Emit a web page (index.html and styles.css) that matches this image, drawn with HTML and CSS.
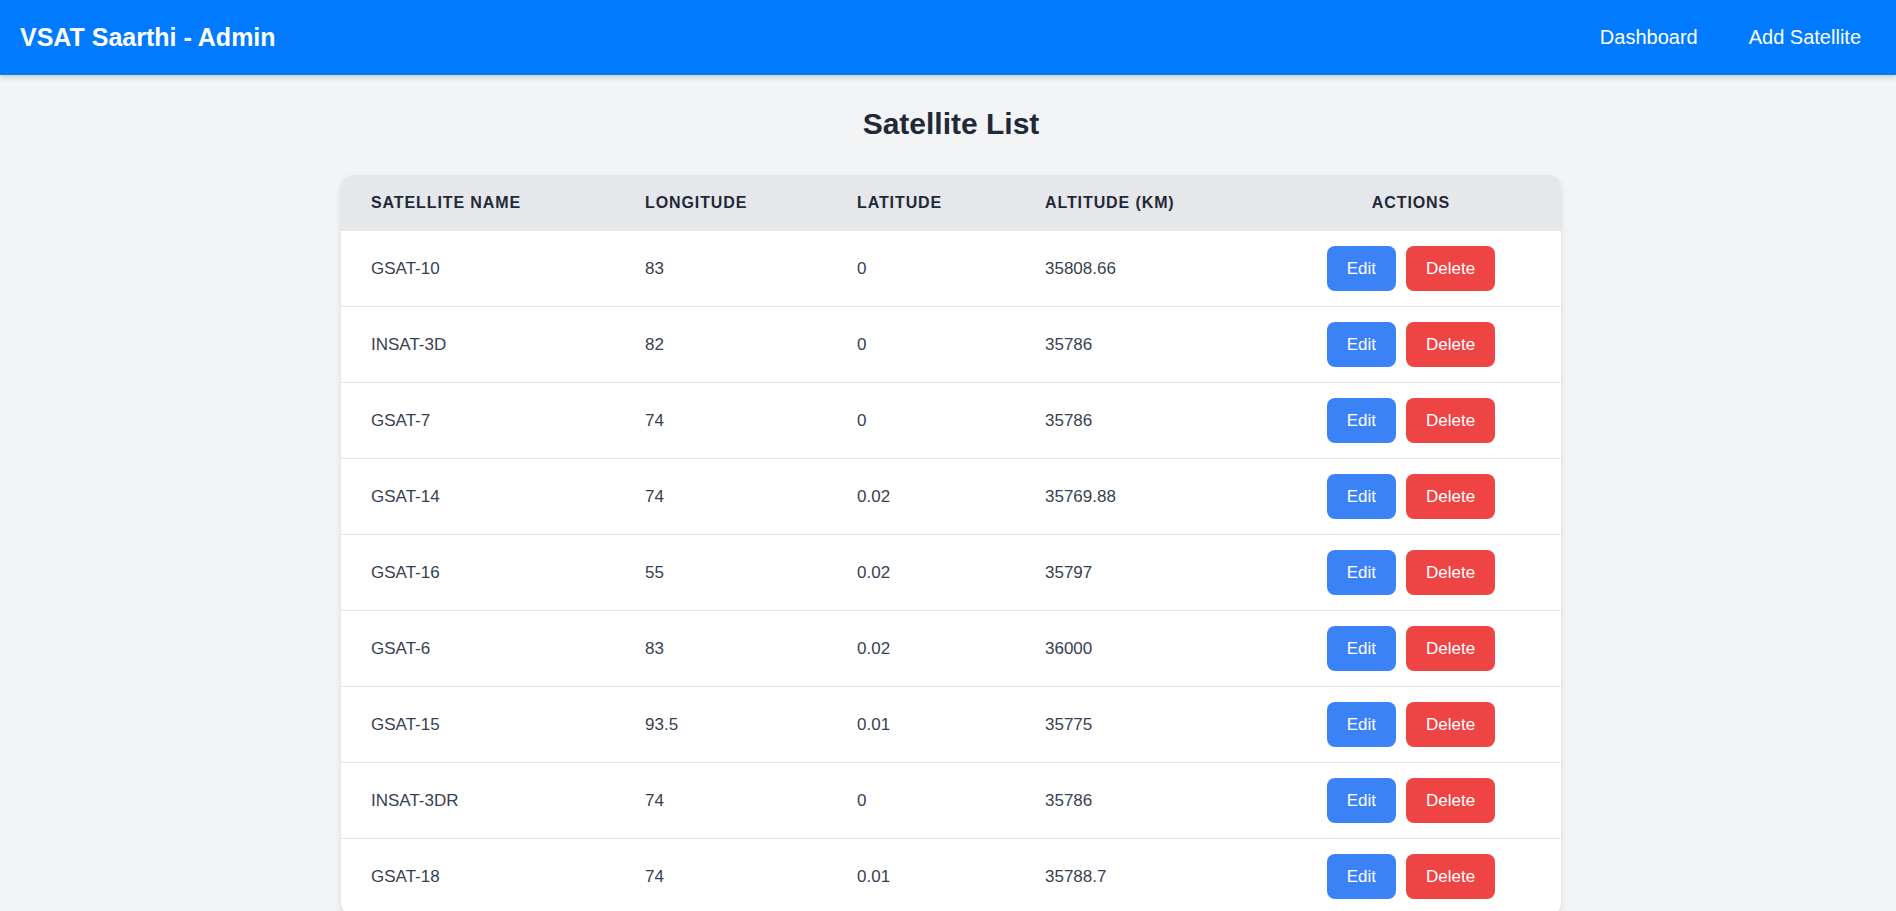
FILE: index.html
```html
<!DOCTYPE html>
<html lang="en">
<head>
<meta charset="utf-8">
<title>VSAT Saarthi - Admin</title>
<link rel="stylesheet" href="styles.css">
</head>
<body>
<header class="navbar">
  <div class="brand">VSAT Saarthi - Admin</div>
  <nav class="nav-links">
    <a href="#" class="nav-link">Dashboard</a>
    <a href="#" class="nav-link">Add Satellite</a>
  </nav>
</header>
<main class="main">
  <h1 class="page-title">Satellite List</h1>
  <div class="table-card">
    <table class="sat-table">
      <colgroup>
        <col class="c-name"><col class="c-lon"><col class="c-lat"><col class="c-alt"><col class="c-act">
      </colgroup>
      <thead>
        <tr>
          <th>Satellite Name</th>
          <th>Longitude</th>
          <th>Latitude</th>
          <th>Altitude (km)</th>
          <th class="center">Actions</th>
        </tr>
      </thead>
      <tbody>
        <tr><td>GSAT-10</td><td>83</td><td>0</td><td>35808.66</td><td><div class="actions"><button class="btn btn-edit">Edit</button><button class="btn btn-delete">Delete</button></div></td></tr>
        <tr><td>INSAT-3D</td><td>82</td><td>0</td><td>35786</td><td><div class="actions"><button class="btn btn-edit">Edit</button><button class="btn btn-delete">Delete</button></div></td></tr>
        <tr><td>GSAT-7</td><td>74</td><td>0</td><td>35786</td><td><div class="actions"><button class="btn btn-edit">Edit</button><button class="btn btn-delete">Delete</button></div></td></tr>
        <tr><td>GSAT-14</td><td>74</td><td>0.02</td><td>35769.88</td><td><div class="actions"><button class="btn btn-edit">Edit</button><button class="btn btn-delete">Delete</button></div></td></tr>
        <tr><td>GSAT-16</td><td>55</td><td>0.02</td><td>35797</td><td><div class="actions"><button class="btn btn-edit">Edit</button><button class="btn btn-delete">Delete</button></div></td></tr>
        <tr><td>GSAT-6</td><td>83</td><td>0.02</td><td>36000</td><td><div class="actions"><button class="btn btn-edit">Edit</button><button class="btn btn-delete">Delete</button></div></td></tr>
        <tr><td>GSAT-15</td><td>93.5</td><td>0.01</td><td>35775</td><td><div class="actions"><button class="btn btn-edit">Edit</button><button class="btn btn-delete">Delete</button></div></td></tr>
        <tr><td>INSAT-3DR</td><td>74</td><td>0</td><td>35786</td><td><div class="actions"><button class="btn btn-edit">Edit</button><button class="btn btn-delete">Delete</button></div></td></tr>
        <tr><td>GSAT-18</td><td>74</td><td>0.01</td><td>35788.7</td><td><div class="actions"><button class="btn btn-edit">Edit</button><button class="btn btn-delete">Delete</button></div></td></tr>
      </tbody>
    </table>
  </div>
</main>
</body>
</html>
```

FILE: styles.css
```css
* { box-sizing: border-box; }

html, body {
  margin: 0;
  padding: 0;
}

body {
  background: #f3f4f6;
  font-family: "Liberation Sans", Arial, sans-serif;
  color: #374151;
}

.navbar {
  height: 75px;
  background: #007bff;
  display: flex;
  align-items: center;
  justify-content: space-between;
  padding: 0 35px 0 20px;
  box-shadow: 0 2px 6px rgba(0, 0, 0, 0.18);
  position: relative;
  z-index: 2;
}

.brand {
  color: #ffffff;
  font-weight: bold;
  font-size: 25px;
}

.nav-links {
  display: flex;
  gap: 51px;
}

.nav-link {
  color: #ffffff;
  text-decoration: none;
  font-size: 20px;
}

.main {
  padding: 31px 0 0 6px;
}

.page-title {
  margin: 0 0 33px;
  text-align: center;
  font-size: 30px;
  line-height: 36px;
  font-weight: bold;
  color: #1f2937;
}

.table-card {
  width: 1220px;
  margin: 0 auto;
  background: #ffffff;
  border-radius: 12px;
  overflow: hidden;
  box-shadow: 0 4px 8px rgba(0, 0, 0, 0.08), 0 1px 3px rgba(0, 0, 0, 0.06);
}

.sat-table {
  width: 100%;
  border-collapse: separate;
  border-spacing: 0;
  table-layout: fixed;
}

.c-name { width: 274px; }
.c-lon { width: 212px; }
.c-lat { width: 188px; }
.c-alt { width: 246px; }
.c-act { width: 300px; }

.sat-table th {
  background: #e5e7eb;
  color: #1f2937;
  font-size: 16px;
  font-weight: bold;
  text-transform: uppercase;
  letter-spacing: 0.9px;
  text-align: left;
  line-height: 18px;
  padding: 19px 30px;
}

.sat-table th.center { text-align: center; }

.sat-table td {
  font-size: 17px;
  padding: 15px 30px;
  border-bottom: 1px solid #e5e7eb;
  vertical-align: middle;
  color: #374151;
}

.actions {
  display: flex;
  justify-content: center;
  gap: 10px;
}

.btn {
  border: none;
  border-radius: 8px;
  color: #ffffff;
  font-family: "Liberation Sans", Arial, sans-serif;
  font-size: 17px;
  line-height: 19px;
  padding: 13px 20px;
  cursor: pointer;
}

.btn-edit { background: #3b82f6; }
.btn-delete { background: #ef4444; }
```
